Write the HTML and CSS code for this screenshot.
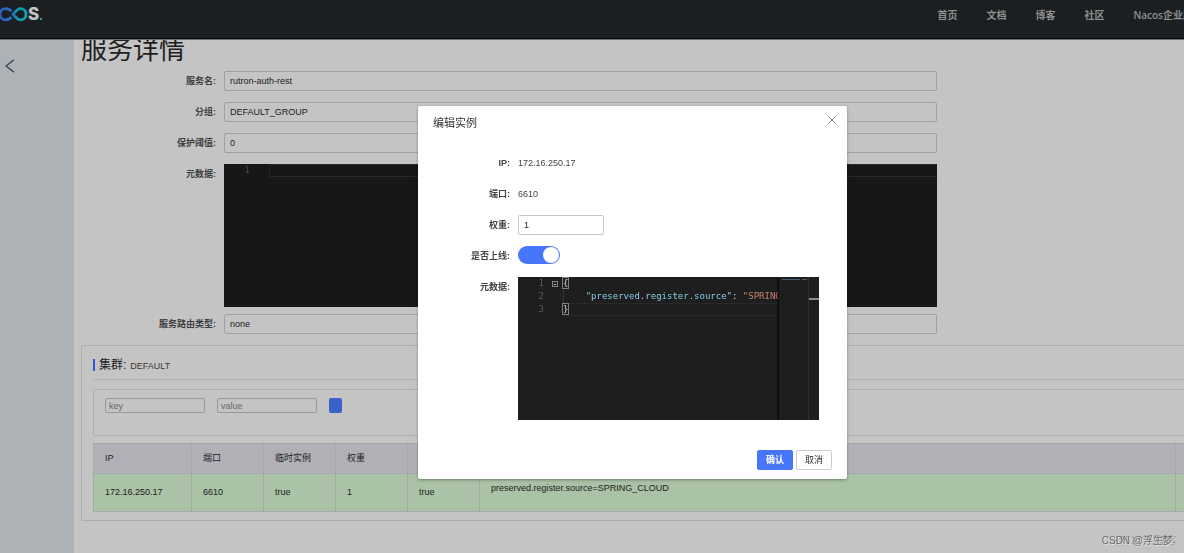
FILE: index.html
```html
<!DOCTYPE html>
<html lang="zh-CN">
<head>
<meta charset="utf-8">
<title>Nacos</title>
<link rel="stylesheet" href="styles.css">
</head>
<body>
<header class="topbar">
  <a class="logo" href="#" aria-label="Nacos">
    <svg width="28" height="16" viewBox="0 0 28 16" fill="none" stroke-width="2.8" aria-hidden="true">
      <defs>
        <linearGradient id="loop" x1="0" y1="0" x2="28" y2="0" gradientUnits="userSpaceOnUse">
          <stop offset="0" stop-color="#2a62bd"/><stop offset="0.42" stop-color="#2b6cbd"/><stop offset="0.6" stop-color="#1292ae"/><stop offset="1" stop-color="#10a9b5"/>
        </linearGradient>
      </defs>
      <path stroke="url(#loop)" d="M11.4 5.2C9.8 3.4 8 2.6 5.6 2.6C2.4 2.6 0 5 0 8.2C0 11.4 2.4 13.8 5.6 13.8C8 13.8 9.8 13 11.4 11.2"/>
      <path stroke="url(#loop)" d="M13 8.2C15.8 5 17.6 2.6 20.4 2.6C23.6 2.6 26 5 26 8.2C26 11.4 23.6 13.8 20.4 13.8C17.6 13.8 15.8 11.4 13 8.2Z"/>
    </svg>
    <span class="logo-letter">S</span><span class="logo-dot"></span>
  </a>
  <nav class="nav">
    <a href="#">首页</a><a href="#">文档</a><a href="#">博客</a><a href="#">社区</a><a href="#">Nacos企业版</a>
  </nav>
</header>
<div class="layout">
  <aside class="sidebar">
    <button class="back" aria-label="返回"><svg width="10" height="14" viewBox="0 0 10 14" fill="none" stroke="#333d47" stroke-width="1.2"><path d="M9 .8L1 7L9 13.2"/></svg></button>
  </aside>
  <main class="main">
    <h1 class="title">服务详情</h1>
    <form class="detail">
      <label for="name">服务名:</label><input id="name" class="field" value="rutron-auth-rest" readonly>
      <label for="group">分组:</label><input id="group" class="field" value="DEFAULT_GROUP" readonly>
      <label for="threshold">保护阈值:</label><input id="threshold" class="field" value="0" readonly>
      <span class="label">元数据:</span>
      <div class="editor editor-page"><div class="line line-active"><span class="num">1</span><span class="code"></span></div></div>
      <label for="route">服务路由类型:</label><input id="route" class="field" value="none" readonly>
    </form>
    <section class="cluster">
      <h2 class="cluster-head"><span class="cluster-title">集群:</span><span class="cluster-name">DEFAULT</span></h2>
      <form class="filter">
        <input class="small-field" placeholder="key" aria-label="key">
        <input class="small-field" placeholder="value" aria-label="value">
        <button class="add" type="button" aria-label="添加"></button>
      </form>
      <table class="instances">
        <colgroup><col class="c-ip"><col class="c-std"><col class="c-std"><col class="c-std"><col class="c-std"><col><col class="c-op"></colgroup>
        <thead><tr><th>IP</th><th>端口</th><th>临时实例</th><th>权重</th><th></th><th></th><th></th></tr></thead>
        <tbody><tr><td>172.16.250.17</td><td>6610</td><td>true</td><td>1</td><td>true</td><td class="meta">preserved.register.source=SPRING_CLOUD</td><td></td></tr></tbody>
      </table>
    </section>
  </main>
</div>
<div class="overlay">
  <div class="dialog" role="dialog" aria-modal="true" aria-labelledby="dlg">
    <div class="dialog-head">
      <h2 id="dlg">编辑实例</h2>
      <button class="close" aria-label="关闭"><svg width="10" height="10" viewBox="0 0 10 10" stroke="#888" stroke-width="1"><path d="M.8 .8L9.2 9.2M9.2 .8L.8 9.2"/></svg></button>
    </div>
    <form class="edit">
      <span class="label">IP:</span><span class="value">172.16.250.17</span>
      <span class="label">端口:</span><span class="value">6610</span>
      <label for="weight">权重:</label><input id="weight" class="field weight" value="1">
      <label for="online">是否上线:</label><input id="online" class="switch" type="checkbox" role="switch" checked>
      <span class="label">元数据:</span>
      <div class="editor editor-dialog">
        <div class="lines">
          <div class="line"><span class="num">1</span><span class="fold"></span><span class="code"><span class="brace">{</span></span></div>
          <div class="line"><span class="num">2</span><span class="code indent">    <span class="key">"preserved.register.source"</span>: <span class="str">"SPRING_CLOUD"</span></span></div>
          <div class="line line-active"><span class="num">3</span><span class="code"><span class="brace">}</span></span></div>
        </div>
        <div class="minimap"><i class="mm-key"></i><i class="mm-str"></i></div>
        <div class="ruler"></div>
      </div>
    </form>
    <div class="actions"><button class="btn primary">确认</button><button class="btn">取消</button></div>
  </div>
</div>
<div class="watermark"><span class="wm-back">@51CTO博客</span><span class="wm-front">CSDN @浮生梦</span></div>
</body>
</html>
```
FILE: styles.css
```css
* { box-sizing: border-box; }
body {
  margin: 0;
  height: 100vh;
  display: flex;
  flex-direction: column;
  overflow: hidden;
  background: #c4c4c4;
  color: #222;
  font: 9px/20px "Liberation Sans", "Noto Sans CJK SC", sans-serif;
}
input, button { font: inherit; color: inherit; margin: 0; }
button { padding: 0; border: 0; background: none; }
h1, h2 { margin: 0; font-weight: 400; }
a { color: inherit; text-decoration: none; }

.topbar {
  flex: none;
  height: 40px;
  display: flex;
  justify-content: space-between;
  overflow: hidden;
  background: #1b1f22;
  border-bottom: 1px solid #6c6e70;
  box-shadow: inset 0 -1px #0a0b0c;
}
.logo { display: flex; align-items: flex-start; padding-top: 6px; }
.logo-letter {
  color: #c2c3c4;
  font: 800 17px/17px Inter, sans-serif;
}
.logo-dot { width: 2px; height: 2px; margin: 12px 0 0 1px; background: #10a9b5; }
.nav {
  display: flex;
  gap: 29px;
  margin-right: -9px;
  padding-top: 5px;
  color: #8d8f90;
  font: 600 10px/20px "Open Sans", "Noto Sans CJK SC", sans-serif;
}

.layout { flex: 1; display: flex; min-height: 0; }
.sidebar { flex: none; width: 74px; padding: 19px 5px; background: #adb2b6; }
.back { display: block; line-height: 0; }
.main { flex: 1; min-width: 0; padding-left: 7px; overflow: hidden; }
.title { height: 31px; font-size: 26px; line-height: 20px; color: #1e1e1e; }

.detail {
  display: grid;
  grid-template-columns: 135px 1fr;
  column-gap: 8px;
  row-gap: 11px;
  margin-right: 247px;
}
label, .label { font-weight: 700; text-align: right; color: #3f3f3f; }
.field {
  width: 100%;
  height: 20px;
  padding: 0 5px;
  border: 1px solid #a0a1a6;
  border-radius: 2px;
  background: transparent;
}
.editor {
  height: 143px;
  background: #1e1e1e;
  color: #d4d4d4;
  font: 9px/13px "DejaVu Sans Mono", monospace;
}
.editor-page { margin-bottom: -4px; background: #171717; }
.line { display: flex; height: 13px; }
.num { flex: none; width: 26px; text-align: right; color: #5a5a5a; }
.code { flex: 1; margin-left: 19px; white-space: pre; }
.line-active .code { box-shadow: inset 0 1px #282828, inset 0 -1px #282828; }
.editor-page .num { color: #4b4b4b; }
.editor-page .code { border-left: 1px solid #242424; }

.cluster {
  margin: 11px -24px 0 0;
  padding: 11px 11px 8px;
  border: 1px solid #aeaeb0;
  border-radius: 2px;
}
.cluster-head {
  display: flex;
  align-items: baseline;
  gap: 4px;
  height: 23px;
  padding-top: 2px;
  border-bottom: 1px solid #b3b3b3;
}
.cluster-title {
  padding-left: 4px;
  border-left: 2px solid #2d57cf;
  font-size: 12px;
  line-height: 12px;
}
.cluster-name { color: #3a3a3a; font-size: 9px; line-height: 12px; }
.filter {
  display: flex;
  align-items: flex-start;
  gap: 12px;
  height: 47px;
  margin: 9px 0 7px;
  padding: 8px 11px;
  border: 1px solid #aeaeb0;
  border-radius: 2px;
}
.small-field {
  width: 100px;
  height: 15px;
  padding: 0 3px;
  border: 1px solid #98999e;
  border-radius: 2px;
  background: transparent;
}
.small-field::placeholder { color: #686868; }
.add { width: 13px; height: 15px; border-radius: 2px; background: #3a62cb; }
.instances {
  width: 100%;
  table-layout: fixed;
  border-collapse: collapse;
}
.c-ip { width: 98px; }
.c-std { width: 72px; }
.c-op { width: 20px; }
.instances th, .instances td {
  padding: 0 11px;
  border: 1px solid #a7a8a8;
  text-align: left;
  font-weight: 400;
}
.instances th { height: 30px; padding-bottom: 1px; background: #b1b0b6; }
.instances td { height: 38px; padding-bottom: 1px; background: #aac2a5; }
.instances .meta { padding-bottom: 9px; }

.overlay {
  position: fixed;
  inset: 0;
  display: flex;
  justify-content: center;
  align-items: flex-start;
  padding: 106px 0 0 81px;
}
.dialog {
  width: 429px;
  padding-bottom: 9px;
  border-radius: 2px;
  background: #fff;
  box-shadow: 0 1px 3px rgba(0, 0, 0, .35);
}
.dialog-head {
  display: flex;
  justify-content: space-between;
  align-items: flex-start;
  padding: 6px 10px 0 15px;
}
.dialog-head h2 { font-size: 11px; line-height: 22px; color: #333; }
.close { padding-top: 3px; line-height: 0; }
.edit {
  display: grid;
  grid-template-columns: 77px 1fr;
  column-gap: 8px;
  row-gap: 11px;
  padding: 19px 28px 0 15px;
}
.edit .label, .edit label, .value { color: #444; }
.weight { width: 86px; border-color: #c4c6cf; background: #fff; }
.switch {
  appearance: none;
  display: flex;
  justify-content: flex-end;
  width: 42px;
  height: 18px;
  padding: 1px;
  border-radius: 9px;
  background: #4776fa;
}
.switch::before {
  content: "";
  width: 16px;
  height: 16px;
  border-radius: 50%;
  background: #fff;
}
.editor-dialog { display: flex; overflow: hidden; }
.lines { flex: 1; min-width: 0; overflow: hidden; }
.fold {
  flex: none;
  width: 6px;
  height: 6px;
  margin: 4px -14px 0 8px;
  border: 1px solid #888;
  background: linear-gradient(#bbb, #bbb) center / 2px 1px no-repeat;
}
.indent { border-left: 1px solid #333; }
.brace { color: #dcdcdc; outline: 1px solid #7d837d; }
.key { color: #86cbe8; }
.str { color: #c9856d; }
.minimap {
  display: flex;
  gap: 2px;
  width: 30px;
  padding: 2px 1px 0 3px;
  box-shadow: -1px 0 2px #000;
  border-right: 1px solid #303030;
}
.mm-key { width: 18px; height: 1px; background: #42606b; }
.mm-str { flex: 1; height: 1px; background: #76503f; }
.ruler { width: 10px; height: 23px; border-bottom: 2px solid #8c8c8c; }
.actions { display: flex; justify-content: flex-end; gap: 3px; padding: 30px 15px 0 0; }
.btn {
  width: 36px;
  height: 20px;
  border: 1px solid #c9cad3;
  border-radius: 2px;
  line-height: 18px;
  color: #333;
}
.primary { border-color: #4776fa; background: #4776fa; color: #fff; font-weight: 700; }

.watermark {
  position: fixed;
  right: 7px;
  bottom: 2px;
  display: grid;
  justify-items: end;
  font-size: 10px;
}
.watermark span { grid-area: 1 / 1; white-space: nowrap; }
.wm-back { color: #a3a3a3; }
.wm-front { margin-right: 4px; color: #6a6a6a; text-shadow: 1px 1px #e2e2e2; }
```
